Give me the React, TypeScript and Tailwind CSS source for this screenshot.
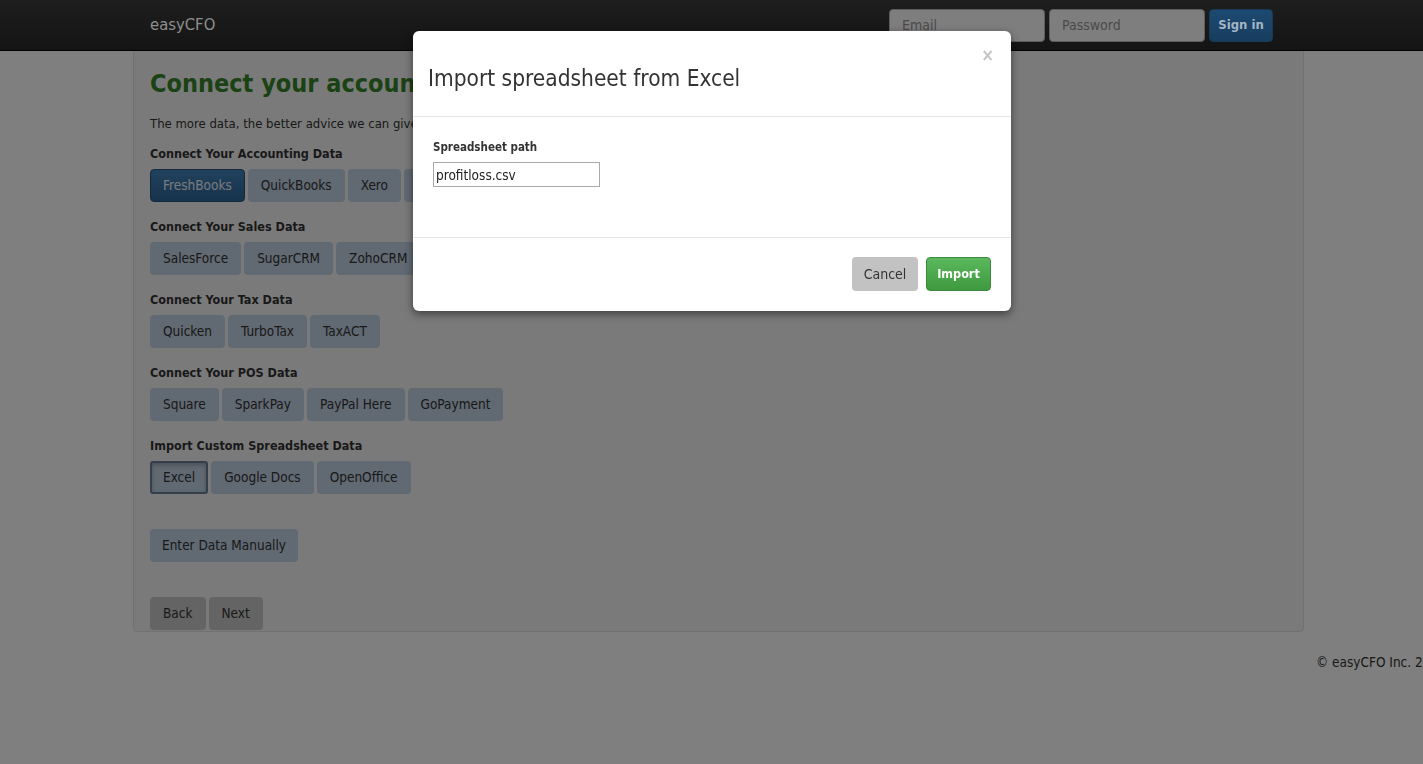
import React from 'react'

const font = { fontFamily: '"DejaVu Sans Condensed", "Liberation Sans Narrow", Roboto, sans-serif' }

const sections = [
  { title: 'Connect Your Accounting Data', items: ['FreshBooks', 'QuickBooks', 'Xero', 'Wave'] },
  { title: 'Connect Your Sales Data', items: ['SalesForce', 'SugarCRM', 'ZohoCRM', 'Highrise'] },
  { title: 'Connect Your Tax Data', items: ['Quicken', 'TurboTax', 'TaxACT'] },
  { title: 'Connect Your POS Data', items: ['Square', 'SparkPay', 'PayPal Here', 'GoPayment'] },
  { title: 'Import Custom Spreadsheet Data', items: ['Excel', 'Google Docs', 'OpenOffice'] },
]

function SourceButton({ label }: { label: string }) {
  if (label === 'FreshBooks') {
    return (
      <button className="h-[33px] px-[12px] rounded-[4px] bg-gradient-to-b from-[#4283bd] to-[#2f6697] border border-[#24527c] text-[#f0f4f8] text-[13.5px]">
        {label}
      </button>
    )
  }
  if (label === 'Excel') {
    return (
      <button className="h-[33px] px-[11px] rounded-[3px] bg-[#c2d2e4] border-2 border-[#6a7f96] shadow-[inset_0_2px_4px_rgba(0,0,0,0.25)] text-[#333] text-[13.5px]">
        {label}
      </button>
    )
  }
  return (
    <button className="h-[33px] px-[13px] rounded-[4px] bg-[#c2d2e4] text-[#333] text-[13.5px]">
      {label}
    </button>
  )
}

export default function App() {
  return (
    <div className="relative w-[1423px] h-[764px] overflow-hidden bg-white text-[#333]" style={font}>
      {/* Navbar */}
      <div className="fixed top-0 inset-x-0 z-20 h-[51px] bg-gradient-to-b from-[#1e1e1e] to-[#141414] border-b border-black">
        <div className="flex items-center h-[50px] pl-[150px] pr-[150px]">
          <span className="text-[#8e8e8e] text-[16.5px]">easyCFO</span>
          <div className="ml-auto flex items-center gap-[4px]">
            <input
              placeholder="Email"
              className="w-[156px] h-[33px] rounded-[4px] bg-[#7e7e7e] border border-[#5c5c5c] px-[12px] text-[14px] placeholder:text-[#4a4a4a] outline-none"
            />
            <input
              placeholder="Password"
              className="w-[156px] h-[33px] rounded-[4px] bg-[#7e7e7e] border border-[#5c5c5c] px-[12px] text-[14px] placeholder:text-[#4a4a4a] outline-none"
            />
            <button className="w-[64px] h-[33px] rounded-[4px] bg-gradient-to-b from-[#1d4a72] to-[#173d5e] border border-[#163a58] text-[#a3b6c6] text-[13px] font-bold">
              Sign in
            </button>
          </div>
        </div>
      </div>

      {/* Page */}
      <div className="pt-[40px]">
        <div className="ml-[133px] w-[1171px] bg-[#f5f5f5] border border-[#e3e3e3] rounded-[4px] pl-[16px] pt-[23px] pb-[1px] flex flex-col items-start">
          <h1 className="text-[25px] leading-[40px] font-bold text-[#378429]">
            Connect your accounts to easyCFO
          </h1>
          <p className="mt-[10px] text-[13px] leading-[20px]">
            The more data, the better advice we can give you about your business.
          </p>
          {sections.map((s, idx) => (
            <div key={s.title} className={idx === 0 ? 'mt-[10px] flex flex-col' : 'mt-[15px] flex flex-col'}>
              <div className="text-[12.5px] leading-[20px] font-bold">{s.title}</div>
              <div className="mt-[5px] flex gap-[3px]">
                {s.items.map((i) => (
                  <SourceButton key={i} label={i} />
                ))}
              </div>
            </div>
          ))}
          <button className="mt-[35px] h-[33px] px-[12px] rounded-[4px] bg-[#c2d2e4] text-[#333] text-[13.5px]">
            Enter Data Manually
          </button>
          <div className="mt-[35px] flex gap-[3px]">
            <button className="h-[33px] px-[13px] rounded-[4px] bg-[#c8c8c8] text-[#333] text-[13.5px]">Back</button>
            <button className="h-[33px] px-[13px] rounded-[4px] bg-[#c8c8c8] text-[#333] text-[13.5px]">Next</button>
          </div>
        </div>
        <div className="mt-[20px] flex justify-end">
          <div className="w-[107px] overflow-hidden whitespace-nowrap text-[13.5px] leading-[20px]">
            © easyCFO Inc. 2013
          </div>
        </div>
      </div>

      {/* Backdrop */}
      <div className="absolute inset-0 z-10 bg-black/50" />

      {/* Modal */}
      <div className="absolute z-30 left-[413px] top-[31px] w-[598px] bg-white rounded-[6px] shadow-[0_3px_9px_rgba(0,0,0,0.5)]">
        <div className="relative px-[15px] pt-[20px] pb-[10px] border-b border-[#e5e5e5]">
          <button className="absolute top-[16px] right-[17px] text-[#c4c4c4] text-[17px] font-bold leading-none">×</button>
          <h3 className="text-[22.5px] leading-[55px] text-[#333]">Import spreadsheet from Excel</h3>
        </div>
        <div className="h-[120px] px-[20px] pt-[20px]">
          <div className="text-[11.5px] leading-[20px] font-bold">Spreadsheet path</div>
          <input
            defaultValue="profitloss.csv"
            className="mt-[5px] w-[167px] h-[25px] border border-[#a9a9a9] px-[2px] text-[13.5px] text-[#222] outline-none"
          />
        </div>
        <div className="border-t border-[#e5e5e5] pt-[19px] pb-[20px] px-[20px] flex justify-end gap-[8px]">
          <button className="w-[66px] h-[34px] rounded-[4px] bg-[#c2c2c2] text-[#333] text-[14px]">Cancel</button>
          <button className="w-[65px] h-[34px] rounded-[4px] bg-gradient-to-b from-[#5cb85c] to-[#3f9a3f] border border-[#3b8a3b] text-white text-[12.5px] font-bold">
            Import
          </button>
        </div>
      </div>
    </div>
  )
}
